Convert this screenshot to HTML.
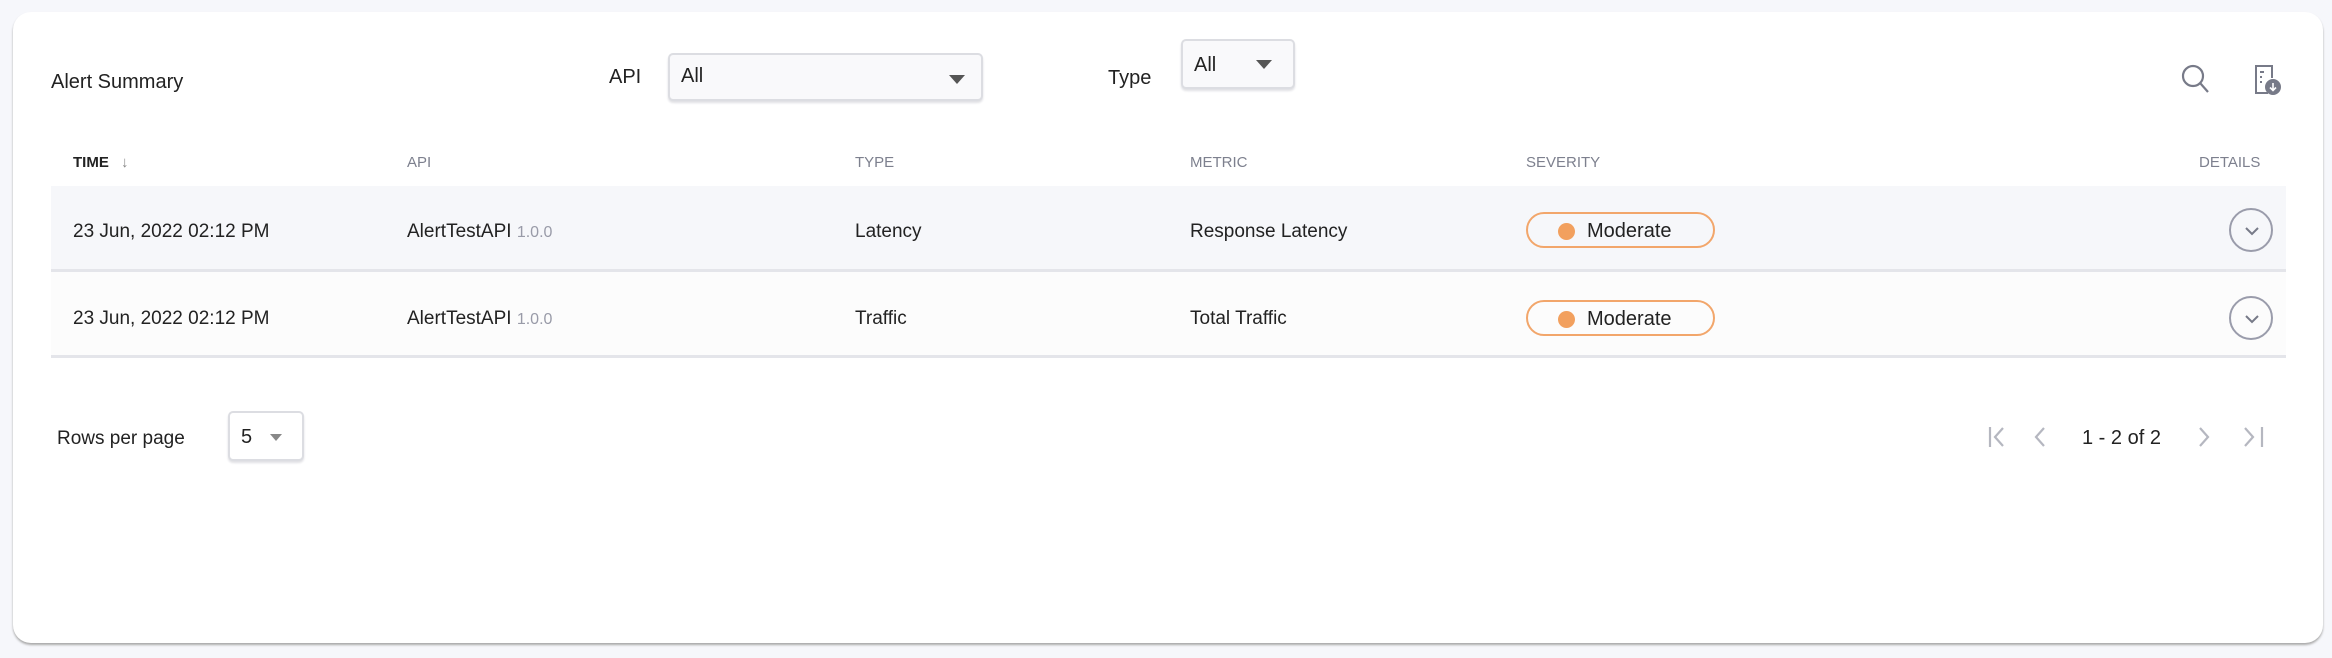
<!DOCTYPE html>
<html><head><style>
*{margin:0;padding:0;box-sizing:border-box}
body{width:2332px;height:658px;background:#f6f7fb;font-family:"Liberation Sans",sans-serif;position:relative;overflow:hidden;color:#222}
.card{position:absolute;left:13px;top:12px;width:2310px;height:631px;background:#fff;border-radius:18px;box-shadow:0 2px 2px #aaa}
.a{position:absolute;white-space:nowrap}
.sel{position:absolute;border:2px solid #dcdde2;border-radius:5px;background:#f9f9fb;box-shadow:0 2px 2px #e0e0e4}
.tri{position:absolute;width:0;height:0;border-left:8px solid transparent;border-right:8px solid transparent;border-top:9px solid #555}
.h{font-size:15px;color:#7d808e;top:154px}
.row{position:absolute;left:51px;width:2235px;height:86px;border-bottom:3px solid #e4e5ea}
.t{font-size:19px;color:#222}
.pill{position:absolute;left:1526px;width:189px;height:36px;border:2px solid #f2a66b;border-radius:18px;font-size:20px}
.pill i{position:absolute;left:30px;top:9px;width:17px;height:17px;border-radius:50%;background:#f2a05e}
.pill span{position:absolute;left:59px;top:6px}
.chev{position:absolute;left:2229px;width:44px;height:44px;border:2px solid #9a9cab;border-radius:50%}
</style></head><body>
<div class="card"></div>
<div class="a" style="left:51px;top:71px;font-size:20px">Alert Summary</div>
<div class="a" style="left:609px;top:66px;font-size:20px">API</div>
<div class="sel" style="left:668px;top:53px;width:315px;height:48px"><span class="a" style="left:11px;top:10px;font-size:20px">All</span><div class="tri" style="left:279px;top:20px"></div></div>
<div class="a" style="left:1108px;top:67px;font-size:20px">Type</div>
<div class="sel" style="left:1181px;top:39px;width:114px;height:50px"><span class="a" style="left:11px;top:13px;font-size:20px">All</span><div class="tri" style="left:73px;top:19px"></div></div>
<svg class="a" style="left:2180px;top:63px" width="32" height="32" viewBox="0 0 32 32" fill="none" stroke="#777a88" stroke-width="2.2"><circle cx="13" cy="13" r="10"/><path d="M20.5 20.5L28 29"/></svg>
<svg class="a" style="left:2252px;top:63px" width="30" height="34" viewBox="0 0 30 34" fill="none" stroke="#777a88" stroke-width="2"><path d="M16 30H4V3h16v12"/><path d="M8 9h4M8 14h2M8 19h2" /><circle cx="21" cy="24" r="7" fill="#777a88"/><path d="M21 20v7M18 24.5l3 3 3-3" stroke="#fff" stroke-width="1.6"/></svg>
<div class="a h" style="left:73px;color:#222;font-weight:bold">TIME <span style="color:#888;font-weight:normal;margin-left:8px">↓</span></div>
<div class="a h" style="left:407px">API</div>
<div class="a h" style="left:855px">TYPE</div>
<div class="a h" style="left:1190px">METRIC</div>
<div class="a h" style="left:1526px">SEVERITY</div>
<div class="a h" style="left:2199px">DETAILS</div>
<div class="row" style="top:186px;background:#f6f7fa"></div>
<div class="row" style="top:272px;background:#fcfcfc"></div>
<div class="a t" style="left:73px;top:221px">23 Jun, 2022 02:12 PM</div>
<div class="a t" style="left:407px;top:221px">AlertTestAPI <span style="color:#999ba8;font-size:16px">1.0.0</span></div>
<div class="a t" style="left:855px;top:221px">Latency</div>
<div class="a t" style="left:1190px;top:221px">Response Latency</div>
<div class="pill" style="top:212px"><i></i><span>Moderate</span></div>
<div class="chev" style="top:208px"><svg class="a" style="left:12px;top:14px" width="18" height="14"><path d="M3 4l6 6 6-6" fill="none" stroke="#777a88" stroke-width="2"/></svg></div>
<div class="a t" style="left:73px;top:308px">23 Jun, 2022 02:12 PM</div>
<div class="a t" style="left:407px;top:308px">AlertTestAPI <span style="color:#999ba8;font-size:16px">1.0.0</span></div>
<div class="a t" style="left:855px;top:308px">Traffic</div>
<div class="a t" style="left:1190px;top:308px">Total Traffic</div>
<div class="pill" style="top:300px"><i></i><span>Moderate</span></div>
<div class="chev" style="top:296px"><svg class="a" style="left:12px;top:14px" width="18" height="14"><path d="M3 4l6 6 6-6" fill="none" stroke="#777a88" stroke-width="2"/></svg></div>
<div class="a t" style="left:57px;top:428px">Rows per page</div>
<div class="sel" style="left:228px;top:411px;width:76px;height:50px;background:#fff"><span class="a" style="left:11px;top:13px;font-size:20px">5</span><div class="tri" style="left:40px;top:21px;border-left-width:6px;border-right-width:6px;border-top-width:7px;border-top-color:#888"></div></div>
<svg class="a" style="left:1986px;top:424px" width="200" height="26" fill="none" stroke="#b5b7c0" stroke-width="2.2"><path d="M4 3v20M17 4l-8 9 8 9"/><path d="M58 4l-8 9 8 9"/></svg>
<div class="a t" style="left:2082px;top:427px;font-size:20px">1 - 2 of 2</div>
<svg class="a" style="left:2190px;top:424px" width="80" height="26" fill="none" stroke="#b5b7c0" stroke-width="2.2"><path d="M10 4l8 9-8 9"/><path d="M55 4l8 9-8 9M72 3v20"/></svg>
</body></html>
